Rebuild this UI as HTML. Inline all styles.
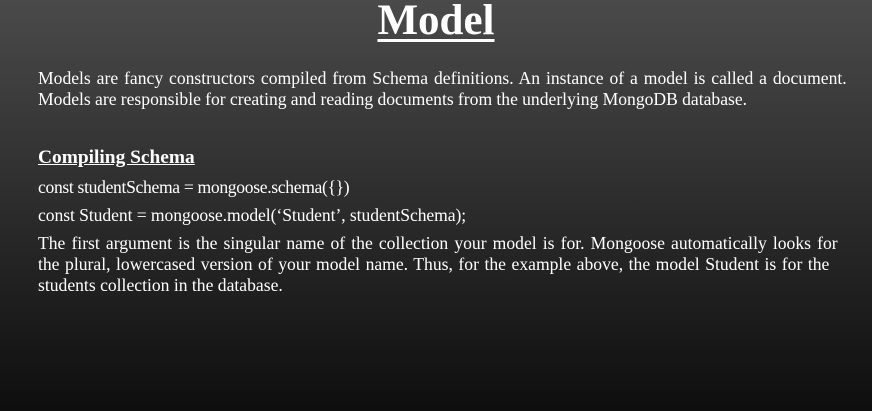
<!DOCTYPE html>
<html><head><style>
html,body{margin:0;padding:0}
body{width:872px;height:411px;overflow:hidden;background:linear-gradient(#4a4a4a,#0e0e0e);color:#fff;font-family:"Liberation Serif",serif;position:relative}
.t{position:absolute;left:0;width:872px;text-align:center;top:-4px;font-size:43px;font-weight:bold;text-decoration:underline;text-decoration-thickness:3px;text-underline-offset:5px}
.p{position:absolute;left:38px;font-size:17.6px;line-height:21px;white-space:nowrap}
</style></head><body>
<div class="t">Model</div>
<div class="p" style="top:68px;word-spacing:1.5px">Models are fancy constructors compiled from Schema definitions. An instance of a model is called a document.</div>
<div class="p" style="top:89px;word-spacing:-0.15px">Models are responsible for creating and reading documents from the underlying MongoDB database.</div>
<div class="p" style="top:147px;font-weight:bold;text-decoration:underline;font-size:19.4px">Compiling Schema</div>
<div class="p" style="top:177px;letter-spacing:-0.33px">const studentSchema = mongoose.schema({})</div>
<div class="p" style="top:205px;letter-spacing:-0.07px">const Student = mongoose.model(‘Student’, studentSchema);</div>
<div class="p" style="top:233px;word-spacing:1.7px">The first argument is the singular name of the collection your model is for. Mongoose automatically looks for</div>
<div class="p" style="top:254px;word-spacing:1.15px">the plural, lowercased version of your model name. Thus, for the example above, the model Student is for the</div>
<div class="p" style="top:275px">students collection in the database.</div>
</body></html>
